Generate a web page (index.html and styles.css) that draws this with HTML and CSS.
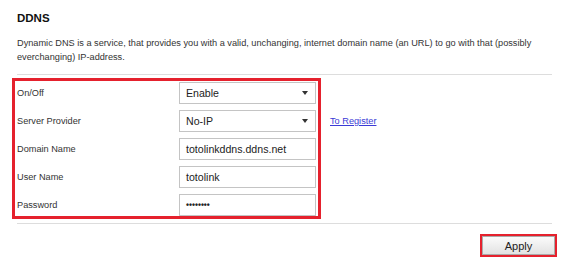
FILE: index.html
```html
<!DOCTYPE html>
<html>
<head>
<meta charset="utf-8">
<link rel="stylesheet" href="styles.css">
</head>
<body>
<div class="page">
  <h1 class="title">DDNS</h1>
  <p class="desc">Dynamic DNS is a service, that provides you with a valid, unchanging, internet domain name (an URL) to go with that (possibly everchanging) IP-address.</p>
  <div class="rule"></div>
  <div class="formarea">
    <div class="box">
      <div class="row"><span class="label">On/Off</span><div class="field select"><span>Enable</span><i class="caret"></i></div></div>
      <div class="row"><span class="label">Server Provider</span><div class="field select"><span>No-IP</span><i class="caret"></i></div></div>
      <div class="row"><span class="label">Domain Name</span><div class="field"><span>totolinkddns.ddns.net</span></div></div>
      <div class="row"><span class="label">User Name</span><div class="field"><span>totolink</span></div></div>
      <div class="row"><span class="label">Password</span><div class="field pwd"><span>••••••••</span></div></div>
    </div>
    <div class="side"><a class="link" href="#">To Register</a></div>
  </div>
  <div class="rule bottom"></div>
  <div class="actions">
    <div class="applywrap"><button class="apply">Apply</button></div>
  </div>
</div>
</body>
</html>
```
FILE: styles.css
```css
html, body { margin: 0; padding: 0; background: #fff; }
body { font-family: "Liberation Sans", Arial, sans-serif; color: #222; }
.page { width: 535px; padding: 11px 0 0 17px; }
.title { margin: 0; font-size: 11.5px; font-weight: bold; color: #111; line-height: 14px; }
.desc { margin: 11px 0 0; font-size: 9.2px; line-height: 14px; color: #333; }
.rule { height: 1px; background: #ddd; margin-top: 10px; }
.rule.bottom { margin-top: 4px; }
.formarea { display: flex; margin-top: 3px; margin-left: -5px; }
.box { border: 3px solid #e5212d; padding: 1px 0 0 2px; display: flex; flex-direction: column; gap: 6px; width: 301px; }
.row { display: flex; align-items: center; height: 22px; }
.label { width: 162px; font-size: 9.2px; color: #333; }
.field { box-sizing: border-box; width: 137px; height: 22px; border: 1px solid #c4c4c4; display: flex; align-items: center; padding: 0 6px; font-size: 10.6px; color: #222; }
.select { justify-content: space-between; }
.caret { width: 0; height: 0; border-left: 3.5px solid transparent; border-right: 3.5px solid transparent; border-top: 4px solid #333; margin-right: 1px; }
.pwd span { font-size: 8.5px; font-weight: bold; }
.side { padding: 32px 0 0 9px; }
.link { font-size: 9.2px; color: #3b3bd6; text-decoration: underline; }
.actions { display: flex; justify-content: flex-end; padding-top: 10px; margin-right: -5px; }
.applywrap { border: 2px solid #e5212d; }
.apply { display: block; width: 73px; height: 19px; font-family: "Liberation Sans", Arial, sans-serif; font-size: 11px; color: #222; border: 1px solid #aaa; background: linear-gradient(#fbfbfb, #e2e2e2); padding: 0; }
```
